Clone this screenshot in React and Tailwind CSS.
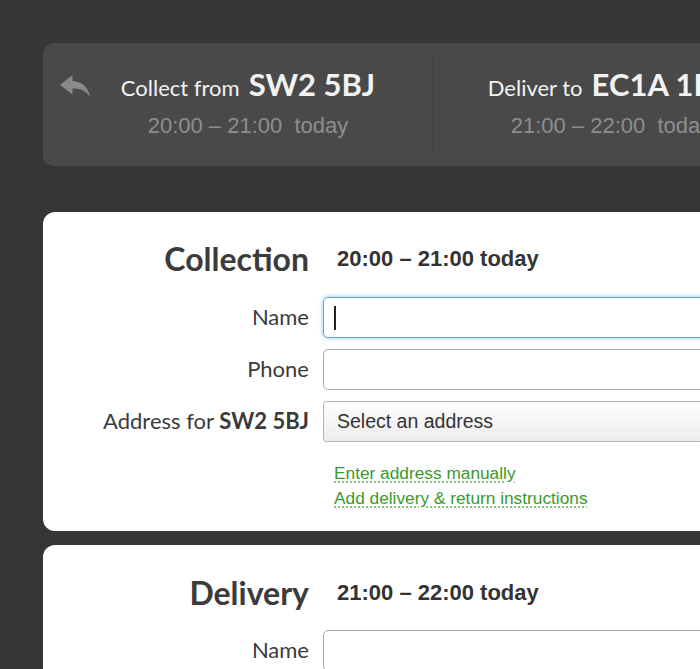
import { useState } from 'react'

const lato = { fontFamily: 'Lato, "Open Sans", sans-serif' }
const helv = { fontFamily: '"Liberation Sans", Arial, sans-serif' }

function ReplyArrow() {
  return (
    <svg width="30" height="22" viewBox="0 0 30 22" fill="#8a8a8a">
      <path d="M0 10 L12.5 0 L12.5 6.2 C21.5 6.4 28.5 11.5 30 22 C26.5 15.8 20.5 13.4 12.5 13.4 L12.5 19.5 Z" />
    </svg>
  )
}

function Leg({ verb, code, time }) {
  return (
    <div className="w-[320px] flex flex-col items-center pt-[23px]">
      <div className="flex items-baseline gap-[9px] text-[#f2f2f2] leading-[36px]" style={lato}>
        <span className="text-[22px]">{verb}</span>
        <span className="text-[31px] font-bold">{code}</span>
      </div>
      <div className="text-[22px] text-[#8e8e8e] leading-[30px] mt-[5px]" style={helv}>
        {time}
      </div>
    </div>
  )
}

function Row({ label, children }) {
  return (
    <>
      <div className="flex items-center justify-end text-[22px] text-[#3a3a3a] h-[41px] pb-[3px]" style={lato}>
        {label}
      </div>
      <div className="h-[41px]">{children}</div>
    </>
  )
}

function Section({ title, time, pt, gap, focused, showAddress }) {
  const [name, setName] = useState('')
  return (
    <div className="w-[760px] bg-white rounded-[12px] grid grid-cols-[266px_1fr] gap-x-[14px]" style={{ paddingTop: pt, paddingBottom: 20 }}>
      <div className="text-right text-[32px] font-bold text-[#3b3b3b] leading-[36px]" style={lato}>{title}</div>
      <div className="flex items-center pl-[14px] text-[22px] font-bold text-[#333] leading-[36px]" style={helv}>{time}</div>

      <div className="col-span-2" style={{ height: gap }} />

      <Row label="Name">
        <div className="relative h-full">
          <input
            value={name}
            onChange={e => setName(e.target.value)}
            className={
              'w-full h-full rounded-[5px] bg-white px-[10px] text-[19px] outline-none caret-transparent ' +
              (focused
                ? 'border border-[#5fa8e4] shadow-[0_0_4px_rgba(82,168,236,0.7)]'
                : 'border border-[#a9a9a9]')
            }
            style={helv}
          />
          {focused && <span className="absolute left-[11px] top-[9px] w-[1.5px] h-[24px] bg-[#222]" />}
        </div>
      </Row>

      {showAddress && (
        <>
          <div className="col-span-2 h-[11px]" />
          <Row label="Phone">
            <input className="w-full h-full rounded-[5px] border border-[#a9a9a9] bg-white px-[10px] text-[19px] outline-none" style={helv} />
          </Row>
          <div className="col-span-2 h-[11px]" />
          <Row label={<span>Address for <b className="font-bold">SW2 5BJ</b></span>}>
            <div className="w-full h-full rounded-[3px] border border-[#b5b5b5] bg-gradient-to-b from-white to-[#ececec] flex items-center pl-[13px] text-[19.5px] text-[#333]" style={helv}>
              Select an address
            </div>
          </Row>
          <div />
          <div className="flex flex-col items-start pl-[11px] pt-[19px] text-[17.3px] leading-[25px] text-[#3a9a2c]" style={helv}>
            <a href="#" className="underline decoration-dotted decoration-[#6cc35e] underline-offset-[3px]">Enter address manually</a>
            <a href="#" className="underline decoration-dotted decoration-[#6cc35e] underline-offset-[3px]">Add delivery &amp; return instructions</a>
          </div>
        </>
      )}
    </div>
  )
}

export default function App() {
  return (
    <div className="w-[700px] h-[669px] overflow-hidden bg-[#363636] pt-[43px] pl-[43px]">
      {/* Route summary */}
      <div className="w-[760px] h-[123px] rounded-[10px] bg-[#494949] flex">
        <div className="w-[45px] pl-[17px] pt-[32px]">
          <ReplyArrow />
        </div>
        <Leg verb="Collect from" code="SW2 5BJ" time={'20:00 – 21:00\u00a0 today'} />
        <div className="w-[25px]" />
        <div className="w-px my-[14px] bg-[#3c3c3c]" />
        <div className="w-[17px]" />
        <Leg verb="Deliver to" code="EC1A 1BB" time={'21:00 – 22:00\u00a0 today'} />
      </div>

      <div className="mt-[46px] flex flex-col gap-[14px]">
        <Section title="Collection" time="20:00 – 21:00 today" pt={29} gap={20} focused showAddress />
        <Section title="Delivery" time="21:00 – 22:00 today" pt={30} gap={19} />
      </div>
    </div>
  )
}
